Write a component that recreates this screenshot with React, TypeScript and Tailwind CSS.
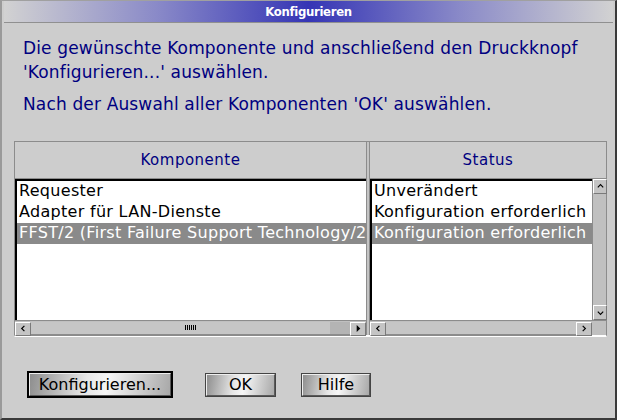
import React from "react";

const font = { fontFamily: '"DejaVu Sans", Verdana, sans-serif' };

function ArrowBtn({ dir }: { dir: "left" | "right" | "up" | "down" | "solidRight" }) {
  const glyph = {
    left: "M6 2 L3 5 L6 8",
    right: "M3 2 L6 5 L3 8",
    up: "M2 6 L5 3 L8 6",
    down: "M2 4 L5 7 L8 4",
    solidRight: "",
  }[dir];
  const vertical = dir === "up" || dir === "down";
  return (
    <div
      className={`${vertical ? "w-[14px] h-[15px]" : "w-[16px] h-[14px]"} shrink-0 flex items-center justify-center bg-[#c4c4c4] border-t border-l border-t-white border-l-white border-b border-r border-b-[#7a7a7a] border-r-[#7a7a7a]`}
    >
      <svg width="9" height="9" viewBox="0 0 10 10">
        {dir === "solidRight" ? (
          <path d="M3 1 L7 5 L3 9 Z" fill="#000" />
        ) : (
          <path d={glyph} fill="none" stroke="#000" strokeWidth="1.3" />
        )}
      </svg>
    </div>
  );
}

function HScroll({ thumb, solid }: { thumb?: boolean; solid?: boolean }) {
  return (
    <div className="h-[15px] flex items-center bg-[#c0c0c0] border-t border-t-[#8c8c8c] pt-px">
      <ArrowBtn dir="left" />
      <div className="flex-1 h-[14px] relative border-b-2 border-b-[#8c8c8c] bg-[#c6c6c6] flex items-center justify-center">
        {thumb && (
          <div className="flex gap-px">
            {[0, 1, 2, 3, 4, 5].map((i) => (
              <div key={i} className="w-px h-[5px] bg-black" />
            ))}
          </div>
        )}
        {thumb && <div className="absolute right-0 top-0 h-[12px] w-[20px] bg-[#b4b4b4]" />}
      </div>
      <ArrowBtn dir={solid ? "solidRight" : "right"} />
    </div>
  );
}

function Btn({ label, def, w }: { label: string; def?: boolean; w: string }) {
  return (
    <div
      className={`${w} flex items-center justify-center ${
        def ? "h-[27px] border-2 border-black" : "h-[24px] border border-[#444]"
      }`}
    >
      <div className="w-full h-full flex items-center justify-center text-[16px] text-black bg-[linear-gradient(100deg,#8e8e8e_0%,#e6e6e6_40%,#f6f6f6_55%,#a8a8a8_100%)] border-t border-l border-t-[#eeeeee] border-l-[#eeeeee] border-b border-r border-b-[#5a5a5a] border-r-[#5a5a5a]">
        {label}
      </div>
    </div>
  );
}

export default function App() {
  const rowsLeft = ["Requester", "Adapter für LAN-Dienste", "FFST/2 (First Failure Support Technology/2)"];
  const rowsRight = ["Unverändert", "Konfiguration erforderlich", "Konfiguration erforderlich"];

  return (
    <div
      className="w-[617px] h-[420px] bg-[#cdcdcd] flex flex-col overflow-hidden border-l-2 border-l-[#9a9a9a] border-r-2 border-r-[#3a3a3a] border-b-2 border-b-[#3a3a3a] border-t border-t-[#a0a0a0]"
      style={font}
    >
      <div className="h-[22px] shrink-0 mx-[2px] flex items-center justify-center bg-[linear-gradient(to_right,#d2d2d2_0%,#8a8ac8_25%,#3535b5_50%,#8a8ac8_75%,#d2d2d2_100%)] border-b border-b-[#909090]">
        <span
          className="text-white text-[13px] font-bold tracking-tight"
          style={{ fontFamily: '"Liberation Sans Narrow", "DejaVu Sans Condensed", "Liberation Sans", sans-serif' }}
        >
          Konfigurieren
        </span>
      </div>

      <div className="flex-1 flex flex-col pl-[12px] pr-[8px]">
        <div className="pt-[13px] pl-[9px] text-[#000080] text-[17px] tracking-[0.15px] leading-[24px]">
          <p>Die gewünschte Komponente und anschließend den Druckknopf</p>
          <p>'Konfigurieren...' auswählen.</p>
          <p className="mt-[8px]">Nach der Auswahl aller Komponenten 'OK' auswählen.</p>
        </div>

        <div className="mt-[25px] h-[196px] flex border-t border-t-[#8c8c8c] border-l border-l-[#8c8c8c] border-r border-r-[#8c8c8c] border-b-2 border-b-white">
          {/* Komponente column */}
          <div className="w-[351px] flex flex-col">
            <div className="h-[37px] flex items-center justify-center text-[#000080] text-[15px] tracking-[0.5px] border-b border-b-[#8c8c8c]">
              Komponente
            </div>
            <div className="flex-1 bg-white border-t-2 border-l-2 border-black overflow-hidden">
              {rowsLeft.map((r, i) => (
                <div
                  key={r}
                  className={`h-[21px] leading-[19px] pl-[2px] text-[16px] tracking-[0.3px] whitespace-nowrap ${
                    i === 2 ? "bg-[#8a8a8a] text-white" : "text-black"
                  }`}
                >
                  {r}
                </div>
              ))}
            </div>
            <HScroll thumb solid />
          </div>

          <div className="w-[4px] flex">
            <div className="w-px bg-[#8c8c8c]" />
            <div className="w-[2px] bg-[#c4c4c4]" />
            <div className="w-px bg-[#8c8c8c]" />
          </div>

          {/* Status column */}
          <div className="flex-1 flex flex-col">
            <div className="h-[37px] flex items-center justify-center text-[#000080] text-[15px] tracking-[0.5px] border-b border-b-[#8c8c8c]">
              Status
            </div>
            <div className="flex-1 flex min-h-0">
              <div className="flex-1 bg-white border-t-2 border-l-2 border-black overflow-hidden">
                {rowsRight.map((r, i) => (
                  <div
                    key={i}
                    className={`h-[21px] leading-[19px] pl-[2px] text-[16px] tracking-[0.3px] whitespace-nowrap ${
                      i === 2 ? "bg-[#8a8a8a] text-white" : "text-black"
                    }`}
                  >
                    {r}
                  </div>
                ))}
              </div>
              <div className="w-[14px] flex flex-col bg-[#c0c0c0] border-l border-l-[#8c8c8c]">
                <ArrowBtn dir="up" />
                <div className="flex-1" />
                <ArrowBtn dir="down" />
              </div>
            </div>
            <div className="flex">
              <div className="flex-1">
                <HScroll />
              </div>
              <div className="w-[14px] bg-[#c0c0c0] border-t border-t-[#8c8c8c]" />
            </div>
          </div>
        </div>

        <div className="flex-1 flex items-end pl-[13px] pb-[20px]">
          <div className="flex items-center gap-[32px]">
            <Btn label="Konfigurieren..." def w="w-[146px]" />
            <div className="flex gap-[25px]">
              <Btn label="OK" w="w-[71px]" />
              <Btn label="Hilfe" w="w-[70px]" />
            </div>
          </div>
        </div>
      </div>
    </div>
  );
}
